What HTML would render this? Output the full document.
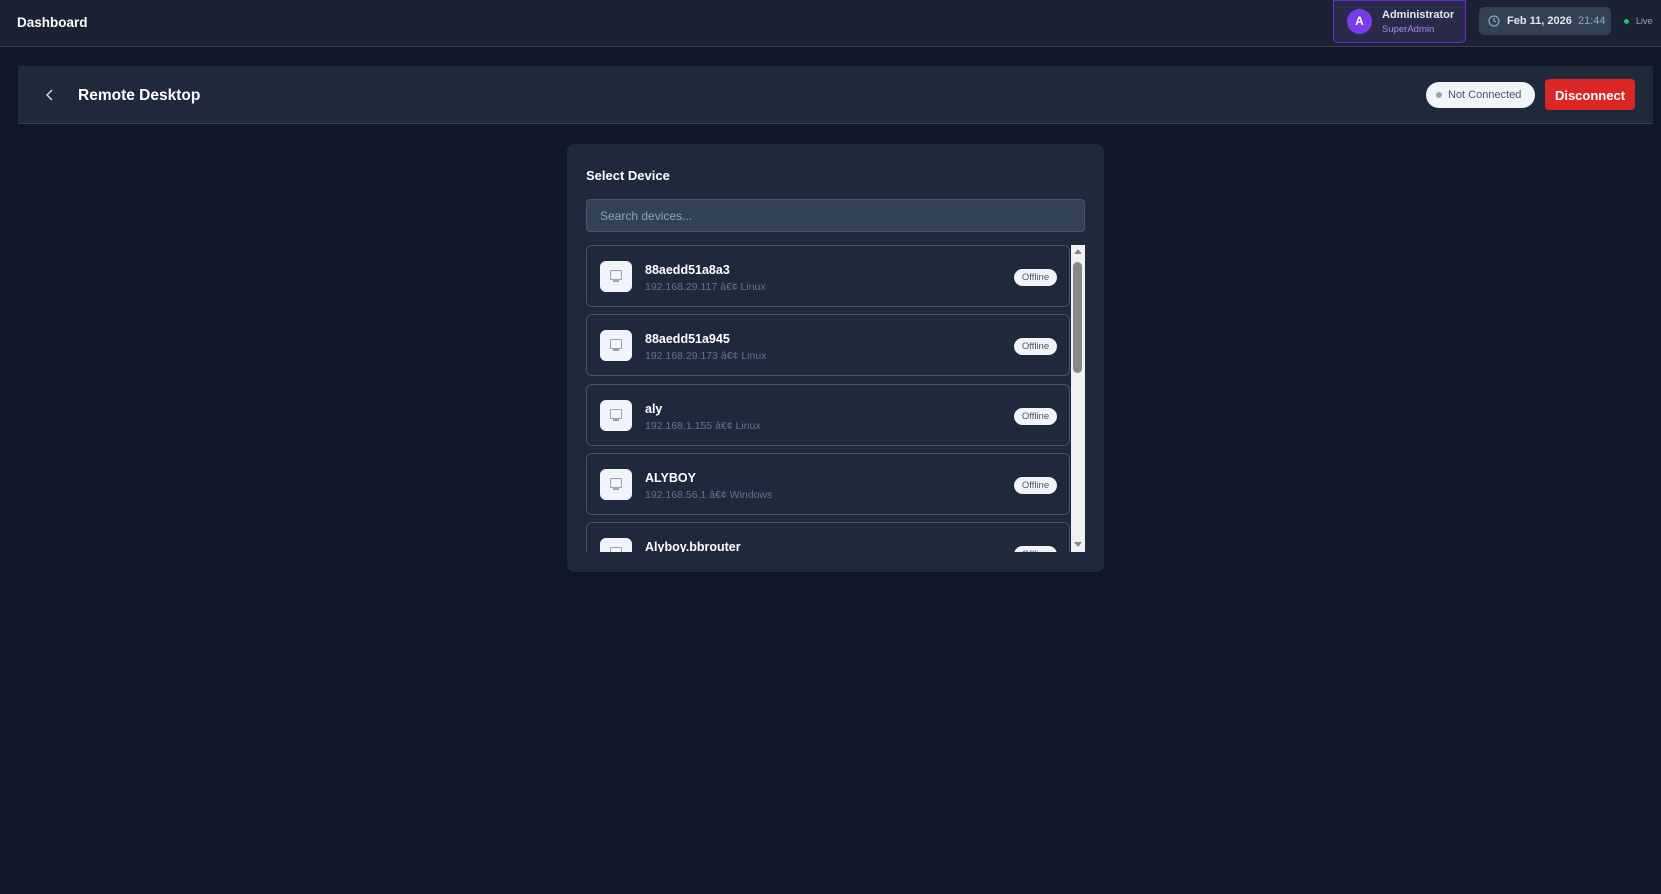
<!DOCTYPE html>
<html><head><meta charset="utf-8"><style>
*{box-sizing:border-box;margin:0;padding:0}
body{width:1661px;height:894px;background:#0f172a;font-family:"Liberation Sans",sans-serif;position:relative;overflow:hidden;color:#fff}
.top{position:absolute;left:0;top:0;width:1661px;height:47px;background:#1a2234;border-bottom:1px solid #334155}
.abs{position:absolute}
.item{position:absolute;left:586px;width:484px;height:62px;border:1px solid #475569;border-radius:6px;background:#1e293b}
.ic{position:absolute;left:13px;top:15px;width:32px;height:31px;background:#f1f5f9;border-radius:6px}
.nm{position:absolute;left:58px;top:17px;font-size:12.5px;font-weight:bold;color:#fff}
.sb{position:absolute;left:58px;top:35px;font-size:10.5px;color:#64748b}
.off{position:absolute;right:12px;top:23px;width:43px;height:17px;border-radius:9px;background:#f1f5f9;color:#475569;font-size:9.5px;text-align:center;line-height:18px}
</style></head><body>
<div class="top"></div>
<div class="abs" style="left:17px;top:15px;font-size:13.5px;font-weight:bold">Dashboard</div>
<div class="abs" style="left:1333px;top:0;width:133px;height:43px;background:#2a2a4a;border:1px solid #6d28d9;border-radius:0 0 5px 5px"></div>
<div class="abs" style="left:1347px;top:9px;width:25px;height:25px;border-radius:50%;background:#7c3aed;font-size:12px;font-weight:bold;text-align:center;line-height:25px">A</div>
<div class="abs" style="left:1382px;top:9px;font-size:11px;font-weight:bold;color:#e2e8f0">Administrator</div>
<div class="abs" style="left:1382px;top:24px;font-size:9.5px;color:#a78bfa">SuperAdmin</div>
<div class="abs" style="left:1479px;top:7px;width:132px;height:28px;background:#334155;border-radius:5px"></div>
<svg class="abs" style="left:1488px;top:15px" width="12" height="12" viewBox="0 0 12 12"><circle cx="6" cy="6" r="5" fill="none" stroke="#94a3b8" stroke-width="1.2"/><path d="M6 3v3l2 1" stroke="#94a3b8" fill="none" stroke-width="1.2"/></svg>
<div class="abs" style="left:1507px;top:15px;font-size:11px;font-weight:bold;color:#e2e8f0">Feb 11, 2026 <span style="font-weight:normal;color:#94a3b8">&nbsp;21:44</span></div>
<div class="abs" style="left:1624px;top:19px;width:5px;height:5px;border-radius:50%;background:#22c55e"></div>
<div class="abs" style="left:1636px;top:16px;font-size:9px;color:#94a3b8">Live</div>

<div class="abs" style="left:18px;top:66px;width:1635px;height:58px;background:#1e293b;border-bottom:1px solid #334155"></div>
<svg class="abs" style="left:45px;top:89px" width="10" height="12" viewBox="0 0 10 12"><path d="M7 1L2 6l5 5" stroke="#cbd5e1" stroke-width="1.5" fill="none"/></svg>
<div class="abs" style="left:78px;top:87px;font-size:15.5px;font-weight:bold">Remote Desktop</div>
<div class="abs" style="left:1426px;top:82px;width:109px;height:26px;background:#f1f5f9;border-radius:13px;color:#475569;font-size:11px;line-height:27px;padding-left:22px">Not Connected</div>
<div class="abs" style="left:1436px;top:92px;width:6px;height:6px;border-radius:50%;background:#94a3b8"></div>
<div class="abs" style="left:1545px;top:79px;width:90px;height:31px;background:#dc2626;border-radius:4px;font-size:13px;font-weight:bold;text-align:center;line-height:33px">Disconnect</div>

<div class="abs" style="left:567px;top:144px;width:537px;height:428px;background:#1e293b;border-radius:8px"></div>
<div class="abs" style="left:586px;top:168px;font-size:13px;font-weight:bold">Select Device</div>
<div class="abs" style="left:586px;top:199px;width:499px;height:33px;background:#334155;border:1px solid #475569;border-radius:4px;font-size:12px;color:#94a3b8;line-height:33px;padding-left:13px">Search devices...</div>
<div class="abs" style="left:586px;top:245px;width:499px;height:307px;overflow:hidden">
<div style="position:relative;left:-586px;top:-245px">
<div class="item" style="top:245px"><div class="ic"></div><div class="nm">88aedd51a8a3</div><div class="sb">192.168.29.117 â€¢ Linux</div><div class="off">Offline</div></div>
<div class="item" style="top:314px"><div class="ic"></div><div class="nm">88aedd51a945</div><div class="sb">192.168.29.173 â€¢ Linux</div><div class="off">Offline</div></div>
<div class="item" style="top:384px"><div class="ic"></div><div class="nm">aly</div><div class="sb">192.168.1.155 â€¢ Linux</div><div class="off">Offline</div></div>
<div class="item" style="top:453px"><div class="ic"></div><div class="nm">ALYBOY</div><div class="sb">192.168.56.1 â€¢ Windows</div><div class="off">Offline</div></div>
<div class="item" style="top:522px"><div class="ic"></div><div class="nm">Alyboy.bbrouter</div><div class="off">Offline</div></div>
</div></div>
<div class="abs" style="left:1071px;top:245px;width:14px;height:307px;background:#f1f1f1"></div>
<div class="abs" style="left:1073px;top:262px;width:9px;height:111px;background:#888;border-radius:5px"></div>
<div class="abs" style="left:1074px;top:249px;width:0;height:0;border-left:4px solid transparent;border-right:4px solid transparent;border-bottom:5px solid #888"></div>
<div class="abs" style="left:1074px;top:542px;width:0;height:0;border-left:4px solid transparent;border-right:4px solid transparent;border-top:5px solid #888"></div>
<style>.ic::after{content:"";position:absolute;left:10px;top:9px;width:10px;height:8px;border:1.3px solid #94a3b8;border-radius:1px}.ic::before{content:"";position:absolute;left:13px;top:19px;width:6px;height:2px;background:#94a3b8}</style>
</body></html>
